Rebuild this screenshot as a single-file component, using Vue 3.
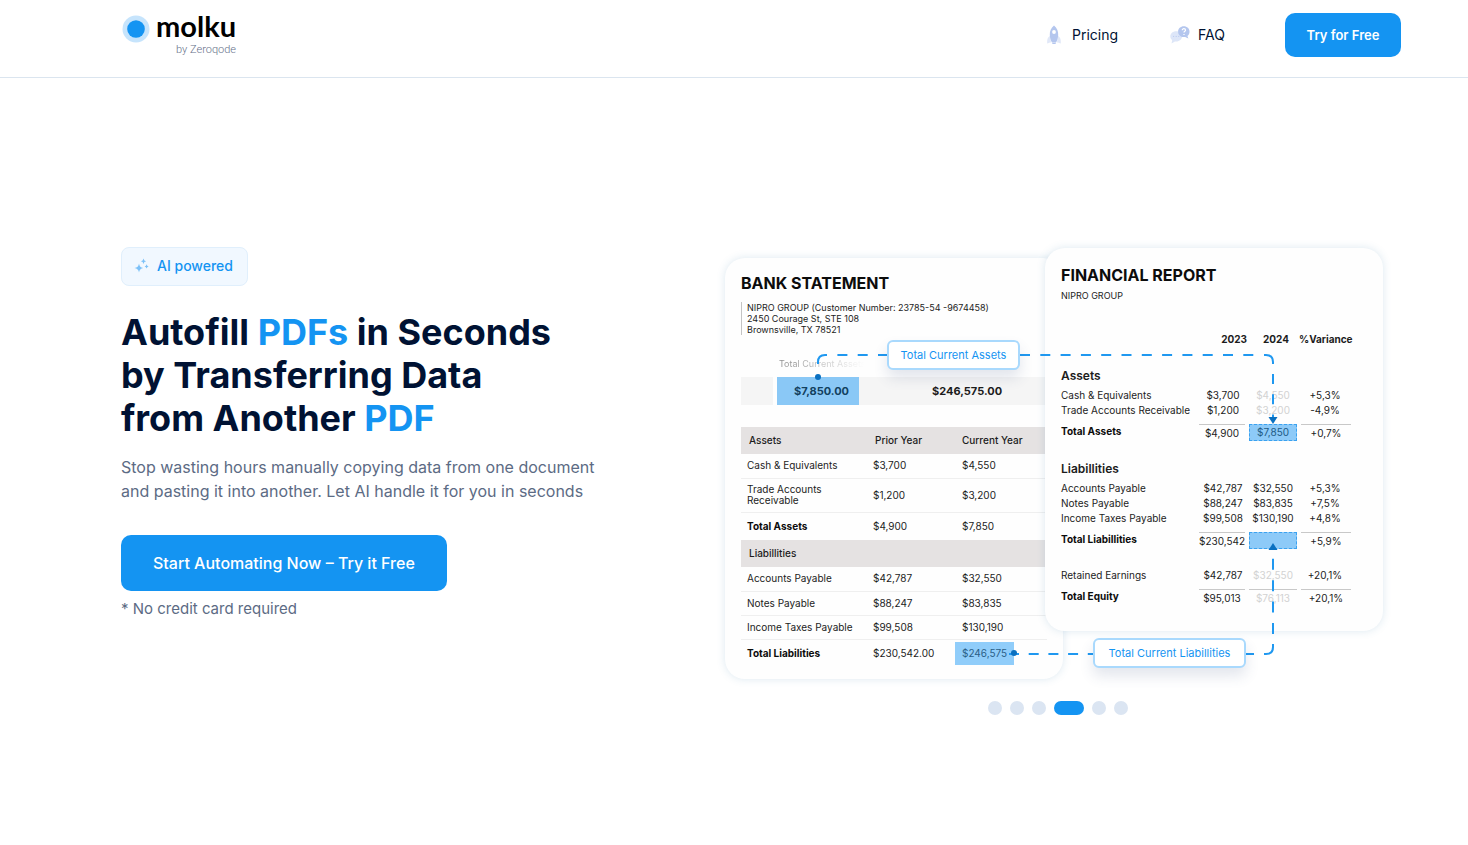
<script setup>
import { ref } from 'vue';

const slides = 6;
const activeSlide = ref(3);

const bankRows = [
  { label: 'Cash & Equivalents', prior: '$3,700', current: '$4,550' },
  { label: 'Trade Accounts Receivable', prior: '$1,200', current: '$3,200', tall: true },
  { label: 'Total Assets', prior: '$4,900', current: '$7,850', total: true },
  { label: 'Liabillities', section: true },
  { label: 'Accounts Payable', prior: '$42,787', current: '$32,550' },
  { label: 'Notes Payable', prior: '$88,247', current: '$83,835' },
  { label: 'Income Taxes Payable', prior: '$99,508', current: '$130,190' },
  { label: 'Total Liabilities', prior: '$230,542.00', current: '$246,575', total: true, marked: true }
];

const reportRows = [
  { label: 'Assets', section: true },
  { label: 'Cash & Equivalents', values: ['$3,700', '$4,550', '+5,3%'], faded: true },
  { label: 'Trade Accounts Receivable', values: ['$1,200', '$3,200', '-4,9%'], faded: true },
  { label: 'Total Assets', values: ['$4,900', '$7,850', '+0,7%'], total: true, target: true },
  { label: 'Liabillities', section: true },
  { label: 'Accounts Payable', values: ['$42,787', '$32,550', '+5,3%'] },
  { label: 'Notes Payable', values: ['$88,247', '$83,835', '+7,5%'] },
  { label: 'Income Taxes Payable', values: ['$99,508', '$130,190', '+4,8%'] },
  { label: 'Total Liabillities', values: ['$230,542', '', '+5,9%'], total: true, target: true },
  { label: 'Retained Earnings', values: ['$42,787', '$32,550', '+20,1%'], faded: true, spaced: true },
  { label: 'Total Equity', values: ['$95,013', '$76,113', '+20,1%'], total: true, faded: true }
];
</script>

<template>
  <div class="page">
    <header class="header">
      <a class="logo" href="#">
        <svg class="logo-mark" width="29" height="28" viewBox="0 0 29 28" aria-hidden="true">
          <circle cx="15" cy="14" r="13.5" fill="#c6e4fc" />
          <circle cx="15" cy="14" r="8.8" fill="#1494f2" />
        </svg>
        <span class="logo-text">
          <span class="logo-name">molku</span>
          <span class="logo-by">by Zeroqode</span>
        </span>
      </a>

      <nav class="nav">
        <a class="nav-link" href="#">
          <svg width="14" height="20" viewBox="0 0 14 20" aria-hidden="true">
            <path d="M3 11C.8 12.2 0 14 .2 18.6c1.4-.9 2.6-1.200 3.800-1.200zM11 11c2.200 1.200 3 3 2.800 7.600-1.400-.9-2.600-1.200-3.800-1.200z" fill="#e1e8f8" />
            <path d="M7 .5C4 3 2.600 6.300 2.800 10c.1 2.900.9 5.400 2 7.200h4.400c1.100-1.800 1.900-4.300 2-7.200C11.400 6.300 10 3 7 .5z" fill="#b4c6ee" />
            <path d="M4.900 17.600h4.200l-.6 1.400h-3z" fill="#b4c6ee" />
            <circle cx="7" cy="7" r="1.900" fill="#fff" />
          </svg>
          Pricing
        </a>
        <a class="nav-link faq" href="#">
          <svg width="20" height="20" viewBox="0 0 21 20" aria-hidden="true">
            <path d="M6.500 6C3 6 .3 8.400.3 11.400c0 1.700.8 3.100 2 4.100L1.600 19l3.600-2.200c.4.100.9.100 1.300.1 3.500 0 6.200-2.400 6.200-5.500S10 6 6.500 6z" fill="#dde6f8" />
            <path d="M14.500.8c3.400 0 6 2.500 6 5.700 0 1.900-.9 3.500-2.200 4.500l1 2.800-3.400-1.700c-.5.1-.9.1-1.400.1-3.400 0-6-2.500-6-5.700s2.600-5.700 6-5.700z" fill="#b4c6ee" />
            <path d="M12.900 5c0-1 .7-1.600 1.700-1.600s1.700.6 1.700 1.500c0 1.200-1.600 1.200-1.600 2.500M14.700 9v1" fill="none" stroke="#fff" stroke-width="1.300" />
            <path d="M3.300 11.500h1M6 11.500h1M8.700 11.500h1" stroke="#b4c6ee" stroke-width="1" />
          </svg>
          FAQ
        </a>
        <button class="nav-button" type="button">Try for Free</button>
      </nav>
    </header>

    <main class="hero">
      <section class="intro">
        <span class="badge">
          <svg width="15" height="15" viewBox="0 0 15 15" fill="#7cc1f8" aria-hidden="true">
            <path d="M5 5.500Q5.500 9.500 9.200 10Q5.500 10.500 5 14.500Q4.500 10.500.5 10Q4.500 9.500 5 5.500z" />
            <path d="M9.500.5Q9.900 3 12.100 3.300Q9.900 3.600 9.500 6.100Q9.100 3.600 6.900 3.300Q9.100 3 9.500.5z" />
            <path d="M12.600 6.300Q12.900 8.100 14.600 8.400Q12.900 8.700 12.600 10.500Q12.300 8.700 10.600 8.400Q12.300 8.100 12.600 6.300z" />
          </svg>
          AI powered
        </span>
        <h1>
          Autofill <em>PDFs</em> in Seconds<br />
          by Transferring Data<br />
          from Another <em>PDF</em>
        </h1>
        <p class="lead">
          Stop wasting hours manually copying data from one document
          and pasting it into another. Let AI handle it for you in seconds
        </p>
        <button class="cta" type="button">Start Automating Now – Try it Free</button>
        <p class="note">* No credit card required</p>
      </section>

      <section class="showcase">
        <div class="stage">
          <article class="card bank">
            <h2>BANK STATEMENT</h2>
            <address>
              NIPRO GROUP (Customer Number: 23785-54 -9674458)<br />
              2450 Courage St, STE 108<br />
              Brownsville, TX 78521
            </address>
            <p class="ghost">Total Current Assets</p>
            <div class="totals">
              <span class="totals-empty"></span>
              <span class="totals-marked">$7,850.00</span>
              <span class="totals-plain">$246,575.00</span>
            </div>
            <table class="bank-table">
              <thead>
                <tr>
                  <th>Assets</th>
                  <th>Prior Year</th>
                  <th>Current Year</th>
                </tr>
              </thead>
              <tbody>
                <tr
                  v-for="row in bankRows"
                  :key="row.label"
                  :class="{ total: row.total, tall: row.tall, section: row.section }"
                >
                  <th v-if="row.section" colspan="3">{{ row.label }}</th>
                  <template v-else>
                    <td><span class="row-label">{{ row.label }}</span></td>
                    <td>{{ row.prior }}</td>
                    <td><span :class="{ marked: row.marked }">{{ row.current }}</span></td>
                  </template>
                </tr>
              </tbody>
            </table>
          </article>

          <article class="card report">
            <h2>FINANCIAL REPORT</h2>
            <p class="company">NIPRO GROUP</p>
            <table class="report-table">
              <thead>
                <tr>
                  <th></th>
                  <th>2023</th>
                  <th>2024</th>
                  <th>%Variance</th>
                </tr>
              </thead>
              <tbody>
                <tr
                  v-for="row in reportRows"
                  :key="row.label"
                  :class="{ total: row.total, section: row.section, faded: row.faded, target: row.target, spaced: row.spaced }"
                >
                  <th v-if="row.section" colspan="4">{{ row.label }}</th>
                  <template v-else>
                    <td>{{ row.label }}</td>
                    <td v-for="(value, index) in row.values" :key="index">
                      <span class="value">{{ value }}</span>
                    </td>
                  </template>
                </tr>
              </tbody>
            </table>
          </article>

          <svg class="wires" width="676" height="450" viewBox="0 0 676 450" fill="none" aria-hidden="true">
            <g stroke="#1f98f0" stroke-width="2">
              <path d="M168 115H112" stroke-dasharray="10 10.300" />
              <path d="M107 115H105Q98 115 98 122V124" />
              <path d="M300 115H540" stroke-dasharray="10 10.300" />
              <path d="M544 115H546Q553 115 553 122V124" />
              <path d="M553 134V178" stroke-dasharray="10 10.300" />
              <path d="M289 414H373" stroke-dasharray="10 9.700" />
              <path d="M523 414H534" />
              <path d="M544 414H546Q553 414 553 407V404" />
              <path d="M553 394V318" stroke-dasharray="11 10.400" />
            </g>
            <g fill="#0a70c0">
              <circle cx="98" cy="137" r="3" />
              <circle cx="294" cy="413" r="3" />
              <path d="M548.500 177H557.500L553 184z" />
              <path d="M548.500 310H557.500L553 303z" />
            </g>
          </svg>
          <span class="tag tag-assets">Total Current Assets</span>
          <span class="tag tag-liabilities">Total Current Liabillities</span>
        </div>

        <div class="dots">
          <button
            v-for="n in slides"
            :key="n"
            type="button"
            class="dot"
            :class="{ active: activeSlide === n - 1 }"
            :aria-label="`Slide ${n}`"
            @click="activeSlide = n - 1"
          ></button>
        </div>
      </section>
    </main>
  </div>
</template>

<style>
body {
  margin: 0;
  background: #fff;
}
</style>

<style scoped>
.page {
  font-family: Inter, 'Liberation Sans', sans-serif;
  color: #001233;
}

a {
  color: inherit;
  text-decoration: none;
}

button {
  border: 0;
  padding: 0;
  font-family: inherit;
  cursor: pointer;
}

h1,
h2,
p {
  margin: 0;
}

.header {
  display: flex;
  align-items: center;
  justify-content: space-between;
  padding: 13px 67px 20px 121px;
  border-bottom: 1px solid #dbe5ef;
}

.logo {
  display: flex;
  align-items: flex-start;
  gap: 6px;
  height: 44px;
}

.logo-mark {
  margin-top: 2px;
}

.logo-text {
  display: flex;
  flex-direction: column;
  align-items: flex-end;
}

.logo-name {
  font-family: Lato, sans-serif;
  font-size: 29px;
  font-weight: 700;
  line-height: 26px;
  color: #000;
}

.logo-by {
  font-family: Roboto, sans-serif;
  font-size: 11px;
  font-weight: 300;
  line-height: 22px;
  color: #667089;
}

.nav {
  display: flex;
  align-items: center;
}

.nav-link {
  display: flex;
  align-items: flex-start;
  gap: 11px;
  margin-right: 52px;
  font-size: 14px;
  line-height: 19px;
}

.nav-link.faq {
  gap: 8px;
  margin-right: 60px;
}

.nav-button {
  width: 116px;
  height: 44px;
  border-radius: 10px;
  background: #1494f2;
  color: #fff;
  font-size: 13px;
  font-weight: 600;
}

.hero {
  display: grid;
  grid-template-columns: 1fr 676px;
  padding: 162px 72px 40px 121px;
}

.intro {
  padding-top: 7px;
}

.badge {
  display: inline-flex;
  align-items: center;
  gap: 8px;
  box-sizing: border-box;
  height: 39px;
  padding: 0 14px 2px 12px;
  border: 1px solid #e0effc;
  border-radius: 8px;
  background: #f1f8ff;
  color: #1494f2;
  font-size: 14px;
  font-weight: 500;
}

h1 {
  margin-top: 25px;
  font-size: 36px;
  font-weight: 700;
  line-height: 43px;
}

h1 em {
  color: #1494f2;
  font-style: normal;
}

.lead {
  max-width: 480px;
  margin-top: 15px;
  color: #5c6b84;
  font-size: 16px;
  line-height: 24px;
}

.cta {
  margin-top: 32px;
  height: 56px;
  padding: 0 32px;
  border-radius: 10px;
  background: #1494f2;
  color: #fff;
  font-size: 16px;
  font-weight: 500;
}

.note {
  margin-top: 8px;
  color: #5c6b84;
  font-size: 15px;
  line-height: 20px;
}

.stage {
  position: relative;
  height: 450px;
}

.card {
  position: absolute;
  box-sizing: border-box;
  width: 338px;
  border-radius: 20px;
  background: #fefefe;
  box-shadow: 0 0 8px rgba(60, 130, 170, 0.18);
  color: #1c1c1c;
}

.card h2 {
  color: #0c0c0c;
  font-size: 16px;
  font-weight: 700;
  line-height: 20px;
}

.bank {
  top: 18px;
  left: 5px;
  height: 421px;
  padding: 15px 16px 0;
}

address {
  margin-top: 9px;
  padding-left: 5px;
  border-left: 1px solid #c4c4c4;
  font-size: 9px;
  font-style: normal;
  line-height: 11px;
  white-space: nowrap;
}

.ghost {
  width: max-content;
  margin: 21px 0 0 38px;
  background: linear-gradient(90deg, #8a8a8a, #fefefe 98%);
  background-clip: text;
  color: transparent;
  font-size: 9px;
  line-height: 16px;
  white-space: nowrap;
}

.totals {
  display: grid;
  grid-template-columns: 32px 82px 1fr;
  column-gap: 4px;
  margin-top: 5px;
  font-size: 11px;
  font-weight: 700;
  line-height: 28px;
}

.totals-empty {
  background: #f5f5f5;
}

.totals-marked {
  padding-right: 10px;
  background: #8ac8f6;
  color: #12415f;
  text-align: right;
  box-sizing: border-box;
}

.totals-plain {
  margin-left: -4px;
  padding-left: 73px;
  background: #f5f5f5;
}

table {
  table-layout: fixed;
  border-collapse: collapse;
  width: 100%;
  font-size: 10px;
  line-height: 11px;
}

th,
td {
  padding: 0;
  text-align: left;
}

.bank-table {
  margin-top: 22px;
}

.bank-table th:nth-child(1) {
  width: 118px;
}

.bank-table th:nth-child(2) {
  width: 81px;
}

.bank-table th {
  height: 27px;
  padding-left: 8px;
  background: #e5e2e2;
  font-weight: 500;
}

.bank-table th:nth-child(3) {
  padding-left: 6px;
}

.bank-table td {
  box-sizing: border-box;
  height: 24px;
  padding-left: 6px;
  border-bottom: 1px solid #efefef;
}

.bank-table .tall td {
  height: 34px;
}

.bank-table .tall .row-label {
  display: block;
  width: 80px;
}

.bank-table .total td {
  height: 28px;
  border-bottom: 0;
}

.total td:first-child {
  color: #0c0c0c;
  font-weight: 700;
}

.marked {
  display: inline-block;
  margin-left: -7px;
  padding: 0 7px;
  background: #90cdfa;
  color: #2a5f88;
  line-height: 23px;
}

.report {
  top: 8px;
  left: 325px;
  height: 383px;
  padding: 17px 16px 0;
}

.company {
  margin-top: 4px;
  font-size: 9px;
  line-height: 14px;
}

.report-table {
  width: 290px;
  margin-top: 29px;
}

.report-table th:nth-child(1) {
  width: 138px;
}

.report-table th:nth-child(2) {
  width: 48px;
  text-align: right;
}

.report-table th:nth-child(3) {
  width: 52px;
  padding-left: 6px;
  box-sizing: border-box;
}

.report-table th {
  height: 16px;
  font-weight: 700;
  text-align: center;
  white-space: nowrap;
}

.report-table thead th {
  height: 14px;
  padding-bottom: 2px;
}

.report-table .section th {
  height: 34px;
  padding-bottom: 6px;
  font-size: 12px;
  line-height: 12px;
  font-weight: 600;
  text-align: left;
  vertical-align: bottom;
}

.report-table td {
  height: 15px;
  text-align: center;
  white-space: nowrap;
}

.report-table td:first-child {
  text-align: left;
}

.report-table .total td {
  height: 23px;
}

.report-table .total td:first-child {
  height: 19px;
  padding-top: 4px;
}

.report-table .total .value {
  display: block;
  box-sizing: border-box;
  height: 17px;
  margin: 6px 2px 0 0;
  border-top: 1px solid #c8c8c8;
  line-height: 17px;
}

.report-table .total td:nth-child(3) .value {
  margin-left: 2px;
}

.report-table .total td:nth-child(4) .value {
  margin-right: 0;
  margin-left: 2px;
}

.report-table .target td:nth-child(3) .value {
  border: 1px dashed #3ba2f0;
  background: #8dcaf8;
  color: #225a85;
  line-height: 15px;
}

.faded td:nth-child(3) {
  color: #d2d2d2;
}

.report-table .spaced td {
  height: 15px;
  padding-top: 19px;
}

.wires {
  position: absolute;
  top: 0;
  left: 0;
}

.tag {
  position: absolute;
  box-sizing: border-box;
  height: 30px;
  border: 2px solid #a9d9fd;
  border-radius: 6px;
  background: #fff;
  box-shadow: 0 8px 14px rgba(60, 80, 130, 0.14);
  color: #1494f2;
  font-size: 11px;
  line-height: 26px;
  text-align: center;
  white-space: nowrap;
}

.tag-assets {
  top: 100px;
  left: 167px;
  width: 133px;
}

.tag-liabilities {
  top: 398px;
  left: 373px;
  width: 153px;
}

.dots {
  display: flex;
  justify-content: center;
  gap: 8px;
  margin-top: 11px;
}

.dot {
  width: 14px;
  height: 14px;
  border-radius: 7px;
  background: #dbe5f2;
}

.dot.active {
  width: 30px;
  background: #1494f2;
}
</style>
